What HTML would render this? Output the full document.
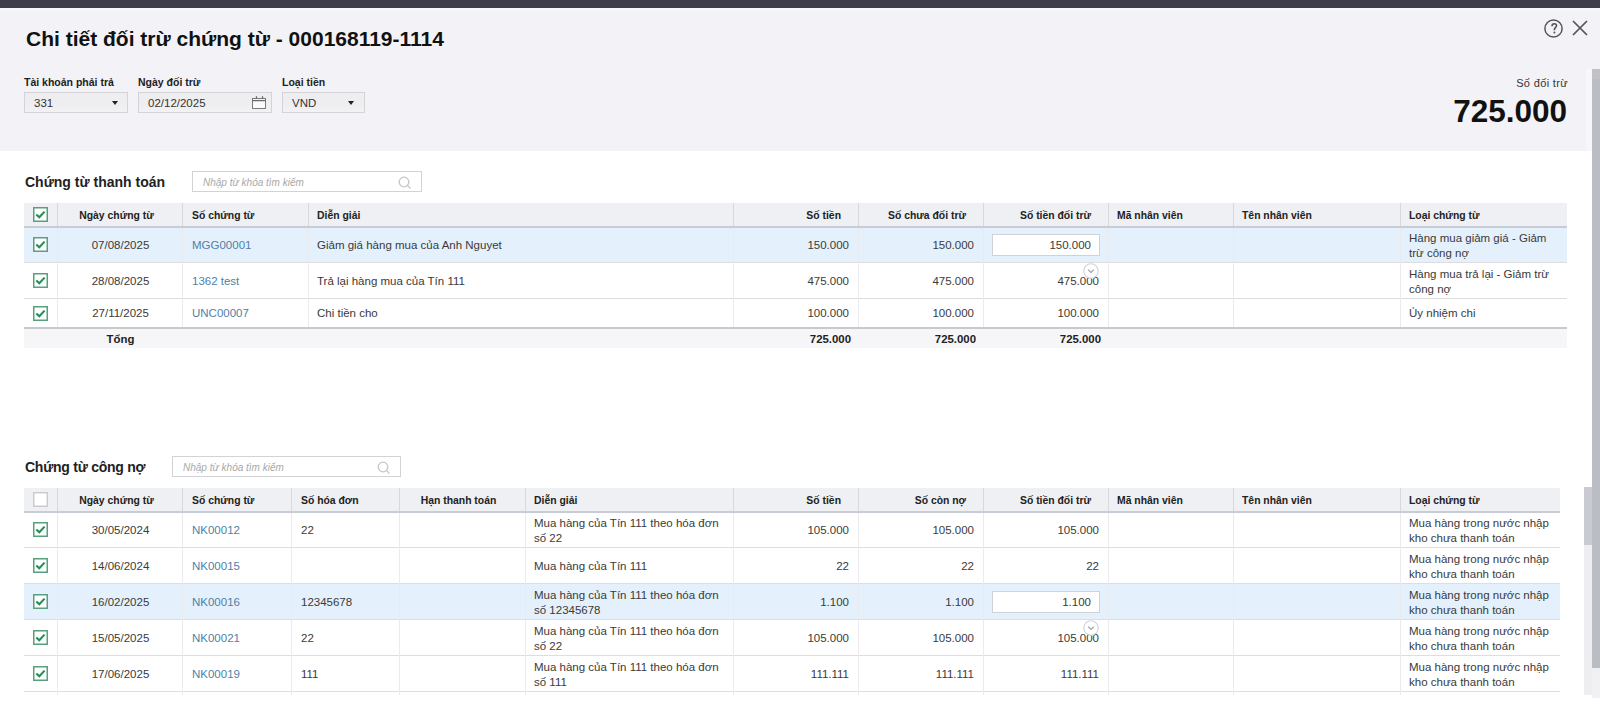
<!DOCTYPE html>
<html><head><meta charset="utf-8"><style>
*{box-sizing:border-box;margin:0;padding:0}
html,body{width:1600px;height:721px;overflow:hidden;background:#fff;font-family:"Liberation Sans", sans-serif;color:#333}
div{position:absolute}
.topbar{left:0;top:0;width:1600px;height:8px;background:#3e3e4b}
.hdr{left:0;top:8px;width:1600px;height:143px;background:#f3f3f7}
.title{left:26px;top:27px;font-size:21px;font-weight:bold;color:#111;white-space:nowrap;line-height:24px}
.lbl{font-size:10.5px;font-weight:bold;color:#222;white-space:nowrap;line-height:12px}
.fbox{height:21px;background:linear-gradient(#eeeef1 55%,#f2f2f5);border:1px solid #d3d3d8;font-size:11.5px;color:#333;line-height:18px;padding-top:0.5px;padding-left:9px}
.tri{width:0;height:0;border-left:3px solid transparent;border-right:3px solid transparent;border-top:4px solid #222}
.sect{font-size:14px;font-weight:bold;color:#222;white-space:nowrap;line-height:16px}
.search{height:21px;background:#fff;border:1px solid #d3d3d5}
.ph{left:10px;top:5px;font-size:10px;font-style:italic;color:#a8a8a8;white-space:nowrap;line-height:12px}
.thbg{background:#eef0f4}
.thline{height:2px;background:#c8cdd5}
.vdiv{width:1px;background:#d6d8dd}
.vdot{width:1px;background:#ebebed}
.hline{height:1px;background:#dedede}
.hl{background:#e4f1fc}
.th,.td,.tf{display:flex;align-items:center;white-space:nowrap;overflow:visible}
.th{font-size:10.4px;font-weight:bold;color:#222;padding-top:1px}
.td{font-size:11.5px;color:#3a3a3a;line-height:15px}
.tf{font-size:11.4px;font-weight:bold;color:#222}
.lnk{color:#4f7fa9}
.cb{width:15px;height:15px}
.cb svg{display:block}
.ftline{height:2px;background:#c9c9cc}
.ftbg{background:#f6f6f9}
.inp{background:#fff;border:1px solid #cfd3d8;font-size:11.5px;color:#3a3a3a;display:flex;align-items:center;justify-content:flex-end;padding-right:8px}
.sb{background:#babdc3}
</style></head><body>
<div class="topbar"></div>
<div class="hdr"></div>
<div style="left:0;top:8px;width:1600px;height:5px;background:linear-gradient(#f8f8fb,#f3f3f7)"></div>
<div class="title">Chi tiết đối trừ chứng từ - 000168119-1114</div>
<svg style="position:absolute;left:1544px;top:19px" width="19" height="19" viewBox="0 0 19 19">
  <circle cx="9.5" cy="9.5" r="8.6" fill="none" stroke="#555" stroke-width="1.5"/>
  <path d="M8.0 7.2 C8.0 5.6 9.0 4.8 10.3 4.8 C11.6 4.8 12.5 5.7 12.5 6.8 C12.5 8.2 10.4 8.6 10.4 10.6 L10.4 11.2" fill="none" stroke="#555" stroke-width="1.6"/>
  <circle cx="10.4" cy="13.6" r="1" fill="#555"/>
</svg>
<svg style="position:absolute;left:1572px;top:20px" width="16" height="16" viewBox="0 0 16 16">
  <path d="M1 1 L15 15 M15 1 L1 15" stroke="#555" stroke-width="1.7" fill="none"/>
</svg>

<div class="lbl" style="left:24px;top:76px">Tài khoản phải trả</div>
<div class="fbox" style="left:24px;top:92px;width:104px">331<div class="tri" style="left:87px;top:8px"></div></div>
<div class="lbl" style="left:138px;top:76px">Ngày đối trừ</div>
<div class="fbox" style="left:138px;top:92px;width:134px">02/12/2025
<svg style="position:absolute;left:113px;top:3px" width="15" height="14" viewBox="0 0 15 14"><rect x="0.5" y="2.5" width="13" height="10" fill="#fafafa" stroke="#7a7a7a" stroke-width="1"/><path d="M0.5 4.6 H13.5" stroke="#6a6a6a" stroke-width="1.3"/><path d="M4.5 0.3 V2.6 M10.5 0.3 V2.6" stroke="#6a6a6a" stroke-width="1.3"/></svg></div>
<div class="lbl" style="left:282px;top:76px">Loại tiền</div>
<div class="fbox" style="left:282px;top:92px;width:83px">VND<div class="tri" style="left:65px;top:8px"></div></div>

<div style="right:32px;top:77px;font-size:11px;letter-spacing:0.35px;color:#333;white-space:nowrap;line-height:13px">Số đối trừ</div>
<div style="right:33px;top:95px;font-size:31.5px;font-weight:bold;color:#111;white-space:nowrap;line-height:32px">725.000</div>

<div style="left:1586px;top:69px;width:6px;height:82px;background:#f7f7fb"></div>
<div class="sb" style="left:1592px;top:69px;width:8px;height:599px"></div>
<div style="left:1592px;top:69px;width:8px;height:10px;background:#c2c2c6"></div>
<div style="left:1592px;top:668px;width:8px;height:30px;background:#f1f1f3"></div>

<div class="sect" style="left:25px;top:174px">Chứng từ thanh toán</div>
<div class="search" style="left:192px;top:171px;width:230px">
  <div class="ph">Nhập từ khóa tìm kiếm</div>
  <svg style="position:absolute;left:205px;top:4px" width="14" height="14" viewBox="0 0 14 14"><circle cx="6" cy="6" r="4.8" fill="none" stroke="#c6c6c6" stroke-width="1.3"/><path d="M9.5 9.5 L12.5 12.5" stroke="#c6c6c6" stroke-width="1.3"/></svg>
</div>
<div class="thbg" style="left:24px;top:203px;width:1543px;height:23px"></div>
<div class="vdiv" style="left:57px;top:203px;height:23px"></div>
<div class="vdiv" style="left:182px;top:203px;height:23px"></div>
<div class="vdiv" style="left:308px;top:203px;height:23px"></div>
<div class="vdiv" style="left:733px;top:203px;height:23px"></div>
<div class="vdiv" style="left:858px;top:203px;height:23px"></div>
<div class="vdiv" style="left:983px;top:203px;height:23px"></div>
<div class="vdiv" style="left:1108px;top:203px;height:23px"></div>
<div class="vdiv" style="left:1233px;top:203px;height:23px"></div>
<div class="vdiv" style="left:1400px;top:203px;height:23px"></div>
<div class="cb" style="left:33px;top:207px"><svg width="15" height="15" viewBox="0 0 15 15"><rect x="0.75" y="0.75" width="13.5" height="13.5" fill="#fbfffd" stroke="#5a9f7e" stroke-width="1.5"/><path d="M3.3 7.4 L6.3 10.2 L11.6 4.6" fill="none" stroke="#2a8c55" stroke-width="2.1"/></svg></div>
<div class="th" style="left:58px;top:203px;width:125px;height:23px;justify-content:center;padding-left:9px;padding-right:17px;">Ngày chứng từ</div>
<div class="th" style="left:183px;top:203px;width:125px;height:23px;justify-content:flex-start;padding-left:9px;padding-right:9px;">Số chứng từ</div>
<div class="th" style="left:308px;top:203px;width:425px;height:23px;justify-content:flex-start;padding-left:9px;padding-right:9px;">Diễn giải</div>
<div class="th" style="left:733px;top:203px;width:125px;height:23px;justify-content:flex-end;padding-left:9px;padding-right:17px;">Số tiền</div>
<div class="th" style="left:858px;top:203px;width:125px;height:23px;justify-content:flex-end;padding-left:9px;padding-right:17px;">Số chưa đối trừ</div>
<div class="th" style="left:983px;top:203px;width:125px;height:23px;justify-content:flex-end;padding-left:9px;padding-right:17px;">Số tiền đối trừ</div>
<div class="th" style="left:1108px;top:203px;width:125px;height:23px;justify-content:flex-start;padding-left:9px;padding-right:9px;">Mã nhân viên</div>
<div class="th" style="left:1233px;top:203px;width:167px;height:23px;justify-content:flex-start;padding-left:9px;padding-right:9px;">Tên nhân viên</div>
<div class="th" style="left:1400px;top:203px;width:167px;height:23px;justify-content:flex-start;padding-left:9px;padding-right:9px;">Loại chứng từ</div>
<div class="hl" style="left:24px;top:227px;width:1543px;height:36px"></div>
<div class="cb" style="left:33px;top:237px"><svg width="15" height="15" viewBox="0 0 15 15"><rect x="0.75" y="0.75" width="13.5" height="13.5" fill="#fbfffd" stroke="#5a9f7e" stroke-width="1.5"/><path d="M3.3 7.4 L6.3 10.2 L11.6 4.6" fill="none" stroke="#2a8c55" stroke-width="2.1"/></svg></div>
<div class="td" style="left:58px;top:227px;width:125px;height:36px;justify-content:center;padding-left:9px;padding-right:9px;">07/08/2025</div>
<div class="td" style="left:183px;top:227px;width:125px;height:36px;justify-content:flex-start;padding-left:9px;padding-right:9px;"><span class="lnk">MGG00001</span></div>
<div class="td" style="left:308px;top:227px;width:425px;height:36px;justify-content:flex-start;padding-left:9px;padding-right:9px;">Giảm giá hàng mua của Anh Nguyet</div>
<div class="td" style="left:733px;top:227px;width:125px;height:36px;justify-content:flex-end;padding-left:9px;padding-right:9px;">150.000</div>
<div class="td" style="left:858px;top:227px;width:125px;height:36px;justify-content:flex-end;padding-left:9px;padding-right:9px;">150.000</div>
<div class="td" style="left:983px;top:227px;width:125px;height:36px;justify-content:flex-end;padding-left:9px;padding-right:9px;"></div>
<div class="td" style="left:1108px;top:227px;width:125px;height:36px;justify-content:flex-start;padding-left:9px;padding-right:9px;"></div>
<div class="td" style="left:1233px;top:227px;width:167px;height:36px;justify-content:flex-start;padding-left:9px;padding-right:9px;"></div>
<div class="td" style="left:1400px;top:227px;width:167px;height:36px;justify-content:flex-start;padding-left:9px;padding-right:9px;padding-top:2px;">Hàng mua giảm giá - Giảm<br>trừ công nợ</div>
<div class="hline" style="left:24px;top:262px;width:1543px"></div>
<div class="cb" style="left:33px;top:273px"><svg width="15" height="15" viewBox="0 0 15 15"><rect x="0.75" y="0.75" width="13.5" height="13.5" fill="#fbfffd" stroke="#5a9f7e" stroke-width="1.5"/><path d="M3.3 7.4 L6.3 10.2 L11.6 4.6" fill="none" stroke="#2a8c55" stroke-width="2.1"/></svg></div>
<div class="td" style="left:58px;top:263px;width:125px;height:36px;justify-content:center;padding-left:9px;padding-right:9px;">28/08/2025</div>
<div class="td" style="left:183px;top:263px;width:125px;height:36px;justify-content:flex-start;padding-left:9px;padding-right:9px;"><span class="lnk">1362 test</span></div>
<div class="td" style="left:308px;top:263px;width:425px;height:36px;justify-content:flex-start;padding-left:9px;padding-right:9px;">Trả lại hàng mua của Tín 111</div>
<div class="td" style="left:733px;top:263px;width:125px;height:36px;justify-content:flex-end;padding-left:9px;padding-right:9px;">475.000</div>
<div class="td" style="left:858px;top:263px;width:125px;height:36px;justify-content:flex-end;padding-left:9px;padding-right:9px;">475.000</div>
<div class="td" style="left:983px;top:263px;width:125px;height:36px;justify-content:flex-end;padding-left:9px;padding-right:9px;">475.000</div>
<div class="td" style="left:1108px;top:263px;width:125px;height:36px;justify-content:flex-start;padding-left:9px;padding-right:9px;"></div>
<div class="td" style="left:1233px;top:263px;width:167px;height:36px;justify-content:flex-start;padding-left:9px;padding-right:9px;"></div>
<div class="td" style="left:1400px;top:263px;width:167px;height:36px;justify-content:flex-start;padding-left:9px;padding-right:9px;padding-top:2px;">Hàng mua trả lại - Giảm trừ<br>công nợ</div>
<div class="hline" style="left:24px;top:298px;width:1543px"></div>
<div class="cb" style="left:33px;top:306px"><svg width="15" height="15" viewBox="0 0 15 15"><rect x="0.75" y="0.75" width="13.5" height="13.5" fill="#fbfffd" stroke="#5a9f7e" stroke-width="1.5"/><path d="M3.3 7.4 L6.3 10.2 L11.6 4.6" fill="none" stroke="#2a8c55" stroke-width="2.1"/></svg></div>
<div class="td" style="left:58px;top:299px;width:125px;height:29px;justify-content:center;padding-left:9px;padding-right:9px;">27/11/2025</div>
<div class="td" style="left:183px;top:299px;width:125px;height:29px;justify-content:flex-start;padding-left:9px;padding-right:9px;"><span class="lnk">UNC00007</span></div>
<div class="td" style="left:308px;top:299px;width:425px;height:29px;justify-content:flex-start;padding-left:9px;padding-right:9px;">Chi tiền cho</div>
<div class="td" style="left:733px;top:299px;width:125px;height:29px;justify-content:flex-end;padding-left:9px;padding-right:9px;">100.000</div>
<div class="td" style="left:858px;top:299px;width:125px;height:29px;justify-content:flex-end;padding-left:9px;padding-right:9px;">100.000</div>
<div class="td" style="left:983px;top:299px;width:125px;height:29px;justify-content:flex-end;padding-left:9px;padding-right:9px;">100.000</div>
<div class="td" style="left:1108px;top:299px;width:125px;height:29px;justify-content:flex-start;padding-left:9px;padding-right:9px;"></div>
<div class="td" style="left:1233px;top:299px;width:167px;height:29px;justify-content:flex-start;padding-left:9px;padding-right:9px;"></div>
<div class="td" style="left:1400px;top:299px;width:167px;height:29px;justify-content:flex-start;padding-left:9px;padding-right:9px;">Ủy nhiệm chi</div>
<div class="hline" style="left:24px;top:327px;width:1543px"></div>
<div class="vdot" style="left:57px;top:227px;height:104px"></div>
<div class="vdot" style="left:182px;top:227px;height:104px"></div>
<div class="vdot" style="left:308px;top:227px;height:104px"></div>
<div class="vdot" style="left:733px;top:227px;height:104px"></div>
<div class="vdot" style="left:858px;top:227px;height:104px"></div>
<div class="vdot" style="left:983px;top:227px;height:104px"></div>
<div class="vdot" style="left:1108px;top:227px;height:104px"></div>
<div class="vdot" style="left:1233px;top:227px;height:104px"></div>
<div class="vdot" style="left:1400px;top:227px;height:104px"></div>
<div class="thline" style="left:24px;top:226px;width:1543px"></div>
<div class="inp" style="left:992px;top:234px;width:108px;height:22px">150.000</div>
<div style="left:1083px;top:263px"><svg width="16" height="16" viewBox="0 0 16 16"><circle cx="8" cy="8" r="7.2" fill="#fff" stroke="#d2d2d6" stroke-width="1.1"/><path d="M5.2 6.8 L8 9.4 L10.8 6.8" fill="none" stroke="#a2a2a8" stroke-width="1.2"/></svg></div>

<div class="ftline" style="left:24px;top:327px;width:1543px"></div>
<div class="ftbg" style="left:24px;top:329px;width:1543px;height:19px"></div>
<div class="tf" style="left:58px;top:329px;width:125px;height:19px;justify-content:center">Tổng</div>
<div class="tf" style="left:733px;top:329px;width:125px;height:19px;justify-content:flex-end;padding-right:7px">725.000</div>
<div class="tf" style="left:858px;top:329px;width:125px;height:19px;justify-content:flex-end;padding-right:7px">725.000</div>
<div class="tf" style="left:983px;top:329px;width:125px;height:19px;justify-content:flex-end;padding-right:7px">725.000</div>


<div class="sect" style="left:25px;top:459px;letter-spacing:-0.25px">Chứng từ công nợ</div>
<div class="search" style="left:172px;top:456px;width:229px">
  <div class="ph">Nhập từ khóa tìm kiếm</div>
  <svg style="position:absolute;left:204px;top:4px" width="14" height="14" viewBox="0 0 14 14"><circle cx="6" cy="6" r="4.8" fill="none" stroke="#c6c6c6" stroke-width="1.3"/><path d="M9.5 9.5 L12.5 12.5" stroke="#c6c6c6" stroke-width="1.3"/></svg>
</div>
<div class="thbg" style="left:24px;top:488px;width:1536px;height:23px"></div>
<div class="vdiv" style="left:57px;top:488px;height:23px"></div>
<div class="vdiv" style="left:182px;top:488px;height:23px"></div>
<div class="vdiv" style="left:291px;top:488px;height:23px"></div>
<div class="vdiv" style="left:399px;top:488px;height:23px"></div>
<div class="vdiv" style="left:525px;top:488px;height:23px"></div>
<div class="vdiv" style="left:733px;top:488px;height:23px"></div>
<div class="vdiv" style="left:858px;top:488px;height:23px"></div>
<div class="vdiv" style="left:983px;top:488px;height:23px"></div>
<div class="vdiv" style="left:1108px;top:488px;height:23px"></div>
<div class="vdiv" style="left:1233px;top:488px;height:23px"></div>
<div class="vdiv" style="left:1400px;top:488px;height:23px"></div>
<div class="cb" style="left:33px;top:492px"><svg width="15" height="15" viewBox="0 0 15 15"><rect x="0.75" y="0.75" width="13.5" height="13.5" fill="#fff" stroke="#c6c6c8" stroke-width="1.3"/></svg></div>
<div class="th" style="left:58px;top:488px;width:125px;height:23px;justify-content:center;padding-left:9px;padding-right:17px;">Ngày chứng từ</div>
<div class="th" style="left:183px;top:488px;width:109px;height:23px;justify-content:flex-start;padding-left:9px;padding-right:9px;">Số chứng từ</div>
<div class="th" style="left:292px;top:488px;width:108px;height:23px;justify-content:flex-start;padding-left:9px;padding-right:9px;">Số hóa đơn</div>
<div class="th" style="left:400px;top:488px;width:125px;height:23px;justify-content:center;padding-left:9px;padding-right:17px;">Hạn thanh toán</div>
<div class="th" style="left:525px;top:488px;width:208px;height:23px;justify-content:flex-start;padding-left:9px;padding-right:9px;">Diễn giải</div>
<div class="th" style="left:733px;top:488px;width:125px;height:23px;justify-content:flex-end;padding-left:9px;padding-right:17px;">Số tiền</div>
<div class="th" style="left:858px;top:488px;width:125px;height:23px;justify-content:flex-end;padding-left:9px;padding-right:17px;">Số còn nợ</div>
<div class="th" style="left:983px;top:488px;width:125px;height:23px;justify-content:flex-end;padding-left:9px;padding-right:17px;">Số tiền đối trừ</div>
<div class="th" style="left:1108px;top:488px;width:125px;height:23px;justify-content:flex-start;padding-left:9px;padding-right:9px;">Mã nhân viên</div>
<div class="th" style="left:1233px;top:488px;width:167px;height:23px;justify-content:flex-start;padding-left:9px;padding-right:9px;">Tên nhân viên</div>
<div class="th" style="left:1400px;top:488px;width:160px;height:23px;justify-content:flex-start;padding-left:9px;padding-right:9px;">Loại chứng từ</div>
<div class="cb" style="left:33px;top:522px"><svg width="15" height="15" viewBox="0 0 15 15"><rect x="0.75" y="0.75" width="13.5" height="13.5" fill="#fbfffd" stroke="#5a9f7e" stroke-width="1.5"/><path d="M3.3 7.4 L6.3 10.2 L11.6 4.6" fill="none" stroke="#2a8c55" stroke-width="2.1"/></svg></div>
<div class="td" style="left:58px;top:512px;width:125px;height:36px;justify-content:center;padding-left:9px;padding-right:9px;">30/05/2024</div>
<div class="td" style="left:183px;top:512px;width:109px;height:36px;justify-content:flex-start;padding-left:9px;padding-right:9px;"><span class="lnk">NK00012</span></div>
<div class="td" style="left:292px;top:512px;width:108px;height:36px;justify-content:flex-start;padding-left:9px;padding-right:9px;">22</div>
<div class="td" style="left:400px;top:512px;width:125px;height:36px;justify-content:center;padding-left:9px;padding-right:9px;"></div>
<div class="td" style="left:525px;top:512px;width:208px;height:36px;justify-content:flex-start;padding-left:9px;padding-right:9px;padding-top:2px;">Mua hàng của Tín 111 theo hóa đơn<br>số 22</div>
<div class="td" style="left:733px;top:512px;width:125px;height:36px;justify-content:flex-end;padding-left:9px;padding-right:9px;">105.000</div>
<div class="td" style="left:858px;top:512px;width:125px;height:36px;justify-content:flex-end;padding-left:9px;padding-right:9px;">105.000</div>
<div class="td" style="left:983px;top:512px;width:125px;height:36px;justify-content:flex-end;padding-left:9px;padding-right:9px;">105.000</div>
<div class="td" style="left:1108px;top:512px;width:125px;height:36px;justify-content:flex-start;padding-left:9px;padding-right:9px;"></div>
<div class="td" style="left:1233px;top:512px;width:167px;height:36px;justify-content:flex-start;padding-left:9px;padding-right:9px;"></div>
<div class="td" style="left:1400px;top:512px;width:160px;height:36px;justify-content:flex-start;padding-left:9px;padding-right:9px;padding-top:2px;">Mua hàng trong nước nhập<br>kho chưa thanh toán</div>
<div class="hline" style="left:24px;top:547px;width:1536px"></div>
<div class="cb" style="left:33px;top:558px"><svg width="15" height="15" viewBox="0 0 15 15"><rect x="0.75" y="0.75" width="13.5" height="13.5" fill="#fbfffd" stroke="#5a9f7e" stroke-width="1.5"/><path d="M3.3 7.4 L6.3 10.2 L11.6 4.6" fill="none" stroke="#2a8c55" stroke-width="2.1"/></svg></div>
<div class="td" style="left:58px;top:548px;width:125px;height:36px;justify-content:center;padding-left:9px;padding-right:9px;">14/06/2024</div>
<div class="td" style="left:183px;top:548px;width:109px;height:36px;justify-content:flex-start;padding-left:9px;padding-right:9px;"><span class="lnk">NK00015</span></div>
<div class="td" style="left:292px;top:548px;width:108px;height:36px;justify-content:flex-start;padding-left:9px;padding-right:9px;"></div>
<div class="td" style="left:400px;top:548px;width:125px;height:36px;justify-content:center;padding-left:9px;padding-right:9px;"></div>
<div class="td" style="left:525px;top:548px;width:208px;height:36px;justify-content:flex-start;padding-left:9px;padding-right:9px;">Mua hàng của Tín 111</div>
<div class="td" style="left:733px;top:548px;width:125px;height:36px;justify-content:flex-end;padding-left:9px;padding-right:9px;">22</div>
<div class="td" style="left:858px;top:548px;width:125px;height:36px;justify-content:flex-end;padding-left:9px;padding-right:9px;">22</div>
<div class="td" style="left:983px;top:548px;width:125px;height:36px;justify-content:flex-end;padding-left:9px;padding-right:9px;">22</div>
<div class="td" style="left:1108px;top:548px;width:125px;height:36px;justify-content:flex-start;padding-left:9px;padding-right:9px;"></div>
<div class="td" style="left:1233px;top:548px;width:167px;height:36px;justify-content:flex-start;padding-left:9px;padding-right:9px;"></div>
<div class="td" style="left:1400px;top:548px;width:160px;height:36px;justify-content:flex-start;padding-left:9px;padding-right:9px;padding-top:2px;">Mua hàng trong nước nhập<br>kho chưa thanh toán</div>
<div class="hline" style="left:24px;top:583px;width:1536px"></div>
<div class="hl" style="left:24px;top:584px;width:1536px;height:36px"></div>
<div class="cb" style="left:33px;top:594px"><svg width="15" height="15" viewBox="0 0 15 15"><rect x="0.75" y="0.75" width="13.5" height="13.5" fill="#fbfffd" stroke="#5a9f7e" stroke-width="1.5"/><path d="M3.3 7.4 L6.3 10.2 L11.6 4.6" fill="none" stroke="#2a8c55" stroke-width="2.1"/></svg></div>
<div class="td" style="left:58px;top:584px;width:125px;height:36px;justify-content:center;padding-left:9px;padding-right:9px;">16/02/2025</div>
<div class="td" style="left:183px;top:584px;width:109px;height:36px;justify-content:flex-start;padding-left:9px;padding-right:9px;"><span class="lnk">NK00016</span></div>
<div class="td" style="left:292px;top:584px;width:108px;height:36px;justify-content:flex-start;padding-left:9px;padding-right:9px;">12345678</div>
<div class="td" style="left:400px;top:584px;width:125px;height:36px;justify-content:center;padding-left:9px;padding-right:9px;"></div>
<div class="td" style="left:525px;top:584px;width:208px;height:36px;justify-content:flex-start;padding-left:9px;padding-right:9px;padding-top:2px;">Mua hàng của Tín 111 theo hóa đơn<br>số 12345678</div>
<div class="td" style="left:733px;top:584px;width:125px;height:36px;justify-content:flex-end;padding-left:9px;padding-right:9px;">1.100</div>
<div class="td" style="left:858px;top:584px;width:125px;height:36px;justify-content:flex-end;padding-left:9px;padding-right:9px;">1.100</div>
<div class="td" style="left:983px;top:584px;width:125px;height:36px;justify-content:flex-end;padding-left:9px;padding-right:9px;"></div>
<div class="td" style="left:1108px;top:584px;width:125px;height:36px;justify-content:flex-start;padding-left:9px;padding-right:9px;"></div>
<div class="td" style="left:1233px;top:584px;width:167px;height:36px;justify-content:flex-start;padding-left:9px;padding-right:9px;"></div>
<div class="td" style="left:1400px;top:584px;width:160px;height:36px;justify-content:flex-start;padding-left:9px;padding-right:9px;padding-top:2px;">Mua hàng trong nước nhập<br>kho chưa thanh toán</div>
<div class="hline" style="left:24px;top:619px;width:1536px"></div>
<div class="cb" style="left:33px;top:630px"><svg width="15" height="15" viewBox="0 0 15 15"><rect x="0.75" y="0.75" width="13.5" height="13.5" fill="#fbfffd" stroke="#5a9f7e" stroke-width="1.5"/><path d="M3.3 7.4 L6.3 10.2 L11.6 4.6" fill="none" stroke="#2a8c55" stroke-width="2.1"/></svg></div>
<div class="td" style="left:58px;top:620px;width:125px;height:36px;justify-content:center;padding-left:9px;padding-right:9px;">15/05/2025</div>
<div class="td" style="left:183px;top:620px;width:109px;height:36px;justify-content:flex-start;padding-left:9px;padding-right:9px;"><span class="lnk">NK00021</span></div>
<div class="td" style="left:292px;top:620px;width:108px;height:36px;justify-content:flex-start;padding-left:9px;padding-right:9px;">22</div>
<div class="td" style="left:400px;top:620px;width:125px;height:36px;justify-content:center;padding-left:9px;padding-right:9px;"></div>
<div class="td" style="left:525px;top:620px;width:208px;height:36px;justify-content:flex-start;padding-left:9px;padding-right:9px;padding-top:2px;">Mua hàng của Tín 111 theo hóa đơn<br>số 22</div>
<div class="td" style="left:733px;top:620px;width:125px;height:36px;justify-content:flex-end;padding-left:9px;padding-right:9px;">105.000</div>
<div class="td" style="left:858px;top:620px;width:125px;height:36px;justify-content:flex-end;padding-left:9px;padding-right:9px;">105.000</div>
<div class="td" style="left:983px;top:620px;width:125px;height:36px;justify-content:flex-end;padding-left:9px;padding-right:9px;">105.000</div>
<div class="td" style="left:1108px;top:620px;width:125px;height:36px;justify-content:flex-start;padding-left:9px;padding-right:9px;"></div>
<div class="td" style="left:1233px;top:620px;width:167px;height:36px;justify-content:flex-start;padding-left:9px;padding-right:9px;"></div>
<div class="td" style="left:1400px;top:620px;width:160px;height:36px;justify-content:flex-start;padding-left:9px;padding-right:9px;padding-top:2px;">Mua hàng trong nước nhập<br>kho chưa thanh toán</div>
<div class="hline" style="left:24px;top:655px;width:1536px"></div>
<div class="cb" style="left:33px;top:666px"><svg width="15" height="15" viewBox="0 0 15 15"><rect x="0.75" y="0.75" width="13.5" height="13.5" fill="#fbfffd" stroke="#5a9f7e" stroke-width="1.5"/><path d="M3.3 7.4 L6.3 10.2 L11.6 4.6" fill="none" stroke="#2a8c55" stroke-width="2.1"/></svg></div>
<div class="td" style="left:58px;top:656px;width:125px;height:36px;justify-content:center;padding-left:9px;padding-right:9px;">17/06/2025</div>
<div class="td" style="left:183px;top:656px;width:109px;height:36px;justify-content:flex-start;padding-left:9px;padding-right:9px;"><span class="lnk">NK00019</span></div>
<div class="td" style="left:292px;top:656px;width:108px;height:36px;justify-content:flex-start;padding-left:9px;padding-right:9px;">111</div>
<div class="td" style="left:400px;top:656px;width:125px;height:36px;justify-content:center;padding-left:9px;padding-right:9px;"></div>
<div class="td" style="left:525px;top:656px;width:208px;height:36px;justify-content:flex-start;padding-left:9px;padding-right:9px;padding-top:2px;">Mua hàng của Tín 111 theo hóa đơn<br>số 111</div>
<div class="td" style="left:733px;top:656px;width:125px;height:36px;justify-content:flex-end;padding-left:9px;padding-right:9px;">111.111</div>
<div class="td" style="left:858px;top:656px;width:125px;height:36px;justify-content:flex-end;padding-left:9px;padding-right:9px;">111.111</div>
<div class="td" style="left:983px;top:656px;width:125px;height:36px;justify-content:flex-end;padding-left:9px;padding-right:9px;">111.111</div>
<div class="td" style="left:1108px;top:656px;width:125px;height:36px;justify-content:flex-start;padding-left:9px;padding-right:9px;"></div>
<div class="td" style="left:1233px;top:656px;width:167px;height:36px;justify-content:flex-start;padding-left:9px;padding-right:9px;"></div>
<div class="td" style="left:1400px;top:656px;width:160px;height:36px;justify-content:flex-start;padding-left:9px;padding-right:9px;padding-top:2px;">Mua hàng trong nước nhập<br>kho chưa thanh toán</div>
<div class="hline" style="left:24px;top:691px;width:1536px"></div>
<div class="vdot" style="left:57px;top:512px;height:183px"></div>
<div class="vdot" style="left:182px;top:512px;height:183px"></div>
<div class="vdot" style="left:291px;top:512px;height:183px"></div>
<div class="vdot" style="left:399px;top:512px;height:183px"></div>
<div class="vdot" style="left:525px;top:512px;height:183px"></div>
<div class="vdot" style="left:733px;top:512px;height:183px"></div>
<div class="vdot" style="left:858px;top:512px;height:183px"></div>
<div class="vdot" style="left:983px;top:512px;height:183px"></div>
<div class="vdot" style="left:1108px;top:512px;height:183px"></div>
<div class="vdot" style="left:1233px;top:512px;height:183px"></div>
<div class="vdot" style="left:1400px;top:512px;height:183px"></div>
<div class="thline" style="left:24px;top:511px;width:1536px"></div>
<div class="inp" style="left:992px;top:591px;width:108px;height:22px">1.100</div>
<div style="left:1083px;top:620px"><svg width="16" height="16" viewBox="0 0 16 16"><circle cx="8" cy="8" r="7.2" fill="#fff" stroke="#d2d2d6" stroke-width="1.1"/><path d="M5.2 6.8 L8 9.4 L10.8 6.8" fill="none" stroke="#a2a2a8" stroke-width="1.2"/></svg></div>

<div style="left:1584px;top:487px;width:8px;height:208px;background:#eeeef0"></div>
<div style="left:1584px;top:487px;width:8px;height:58px;background:#c9cbd0"></div>
</body></html>
